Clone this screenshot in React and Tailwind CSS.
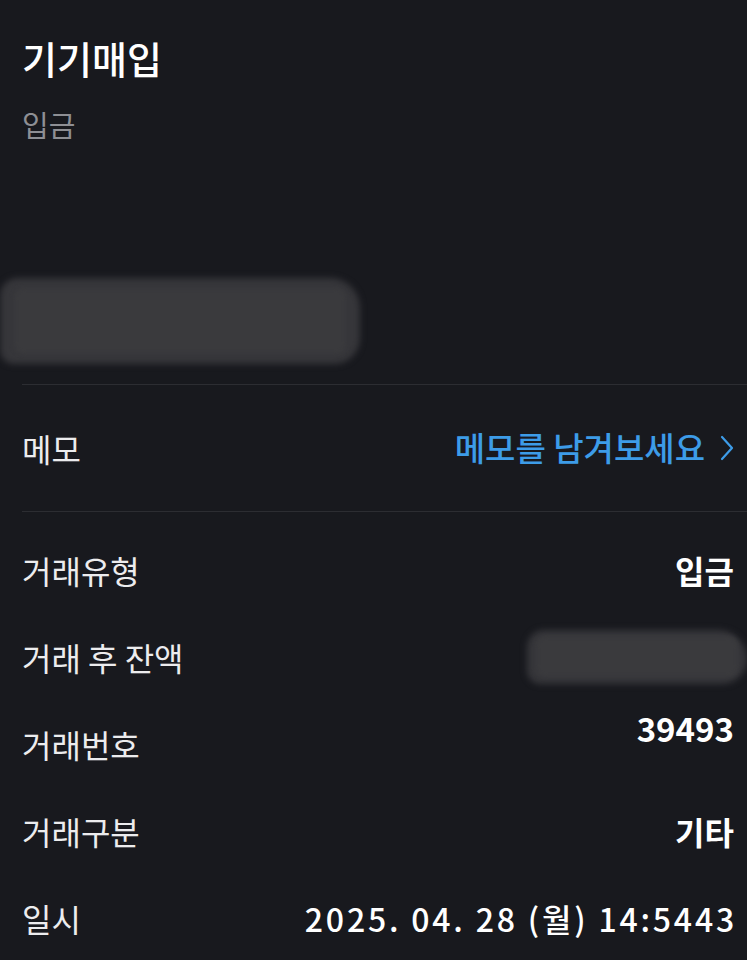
const font = { fontFamily: '"Noto Sans CJK KR", "Noto Sans", sans-serif' };

function Smudge({ className }) {
  return (
    <div className={`relative ${className}`}>
      <div className="absolute inset-0 rounded-[18px_30px_26px_14px] bg-[#36363a] blur-[3px]" />
      <div className="absolute inset-x-[4%] inset-y-[12%] rounded-[10px] bg-[#3a3a3d] blur-[2px]" />
    </div>
  );
}

function Row({ label, children, valueClass = '' }) {
  return (
    <div className="flex h-[87px] items-center justify-between pr-[13px]">
      <span className="text-[32px] text-[#ececee]">{label}</span>
      <div className={valueClass}>{children}</div>
    </div>
  );
}

export default function App() {
  return (
    <div
      className="h-[960px] w-[747px] overflow-hidden bg-[#18191e] pl-[22px] text-white"
      style={font}
    >
      <div className="pt-[28px]">
        <h1 className="text-[38px] font-medium leading-[60px] text-white">기기매입</h1>
        <p className="mt-[14px] text-[29px] leading-[44px] text-[#8e8f94]">입금</p>
      </div>

      <div className="-ml-[22px] mt-[132px] h-[86px] w-[360px]">
        <Smudge className="h-full w-full" />
      </div>

      <div className="mt-[20px] border-t border-[#2c2d32]" />

      <div className="flex h-[126px] items-center justify-between pr-[12px]">
        <span className="text-[32px] text-[#ececee]">메모</span>
        <span className="flex items-center gap-[14px] text-[33px] font-medium text-[#3d9ce8]">
          메모를 남겨보세요
          <svg width="16" height="30" viewBox="0 0 16 30" fill="none">
            <path d="M3 4l10 11-10 11" stroke="#3d9ce8" strokeWidth="2.2" strokeLinecap="round" strokeLinejoin="round" />
          </svg>
        </span>
      </div>

      <div className="border-t border-[#2c2d32]" />

      <div className="pt-[14px]">
        <Row label="거래유형" valueClass="text-[32px] font-semibold">입금</Row>
        <Row label="거래 후 잔액">
          <div className="-mr-[13px] h-[54px] w-[220px]">
            <Smudge className="h-full w-full" />
          </div>
        </Row>
        <Row label="거래번호" valueClass="-mt-[30px] text-[33px] font-bold">39493</Row>
        <Row label="거래구분" valueClass="text-[32px] font-semibold">기타</Row>
        <Row label="일시" valueClass="-mr-[3px] text-[32px] font-medium tracking-[2.8px]">2025. 04. 28 (월) 14:5443</Row>
      </div>
    </div>
  );
}
